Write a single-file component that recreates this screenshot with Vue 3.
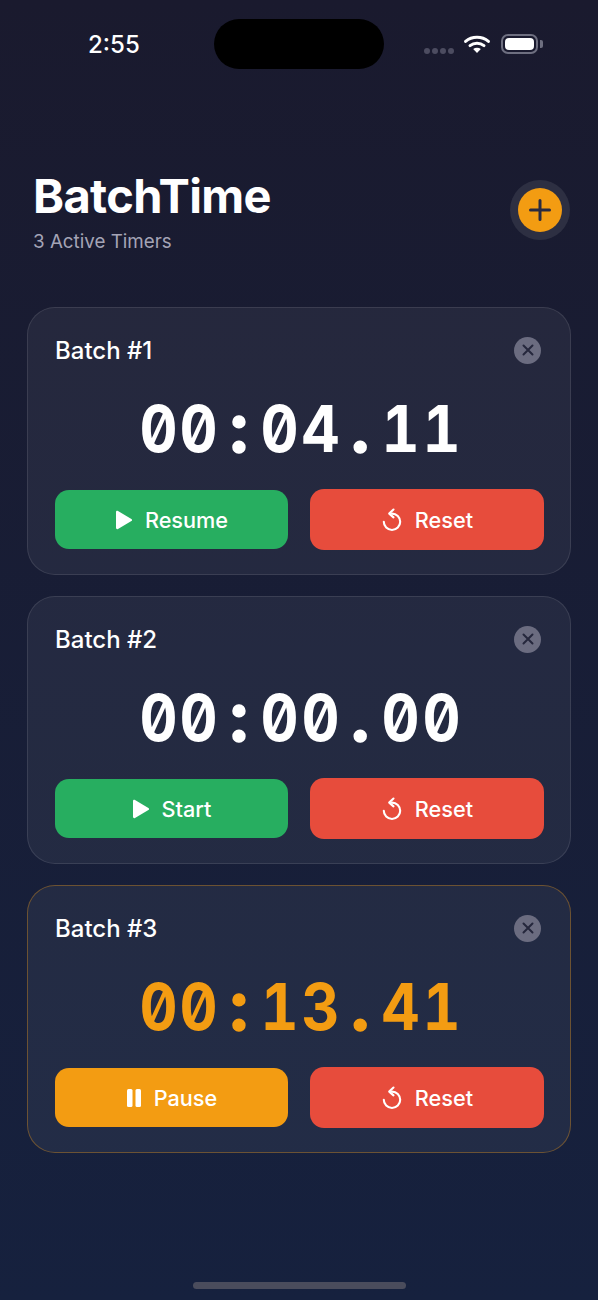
<template>
  <div class="screen">
    <div class="status-bar">
      <span class="clock">2:55</span>
      <div class="island"></div>
      <div class="status-icons">
        <div class="dots"><i></i><i></i><i></i><i></i></div>
        <svg class="wifi" width="26" height="18" viewBox="0 0 26 18">
          <path d="M1.6 6.4C8 .9 18 .9 24.4 6.4" fill="none" stroke="#fff" stroke-width="3" stroke-linecap="round" />
          <path d="M6 10.6C10 7.4 16 7.4 20 10.6" fill="none" stroke="#fff" stroke-width="3" stroke-linecap="round" />
          <path d="M13 18 9.2 13.9C11.4 12.3 14.6 12.3 16.8 13.9Z" fill="#fff" />
        </svg>
        <div class="battery"><div class="battery-fill"></div></div>
        <div class="battery-cap"></div>
      </div>
    </div>

    <header class="header">
      <div>
        <h1>BatchTime</h1>
        <p>{{ timers.length }} Active Timers</p>
      </div>
      <button class="add">
        <svg width="24" height="24" viewBox="0 0 24 24">
          <path d="M12 2.5v19M2.5 12h19" stroke="#2a2a40" stroke-width="3" stroke-linecap="round" />
        </svg>
      </button>
    </header>

    <main class="list">
      <section v-for="t in timers" :key="t.name" class="card" :class="{ running: t.running }">
        <div class="card-top">
          <span class="name">{{ t.name }}</span>
          <button class="close">
            <svg width="14" height="14" viewBox="0 0 14 14">
              <path d="M2.5 2.5l9 9M11.5 2.5l-9 9" stroke="#25273c" stroke-width="2" stroke-linecap="round" />
            </svg>
          </button>
        </div>
        <div class="time">
          <span v-for="(c, i) in t.time" :key="i" class="cell" :class="{ sep: c === ':' || c === '.' }">{{ c }}</span>
        </div>
        <div class="actions">
          <button class="btn" :class="t.running ? 'pause' : 'go'">
            <svg v-if="t.running" width="16" height="20" viewBox="0 0 16 20">
              <rect x="1" y="1" width="5.5" height="18" rx="1.5" fill="#fff" />
              <rect x="9.5" y="1" width="5.5" height="18" rx="1.5" fill="#fff" />
            </svg>
            <svg v-else width="18" height="20" viewBox="0 0 18 20">
              <path d="M1 2.2C1 1 2 .5 3 1l13.4 7.9c.9.5.9 1.7 0 2.2L3 19c-1 .5-2 0-2-1.2Z" fill="#fff" />
            </svg>
            <span>{{ t.label }}</span>
          </button>
          <button class="btn reset">
            <svg width="22" height="24" viewBox="0 0 22 24">
              <path d="M11 5.6a8.2 8.2 0 1 1-8.2 8.2" fill="none" stroke="#fff" stroke-width="2.1" stroke-linecap="round" />
              <path d="M12.5 1.5 8.2 5.6l4.3 3.8" fill="none" stroke="#fff" stroke-width="2.1" stroke-linecap="round" stroke-linejoin="round" />
            </svg>
            <span>Reset</span>
          </button>
        </div>
      </section>
    </main>

    <div class="home-bar"></div>
  </div>
</template>

<script setup>
const timers = [
  { name: 'Batch #1', time: '00:04.11', label: 'Resume', running: false },
  { name: 'Batch #2', time: '00:00.00', label: 'Start', running: false },
  { name: 'Batch #3', time: '00:13.41', label: 'Pause', running: true },
];
</script>

<style>
body {
  background: #16213e;
}
</style>

<style scoped>
.screen {
  position: relative;
  height: 1300px;
  overflow: hidden;
  background: linear-gradient(180deg, #1a1a2e 0%, #16213e 100%);
  color: #fff;
  font-family: Inter, "Liberation Sans", sans-serif;
}

.status-bar {
  display: flex;
  align-items: flex-start;
  height: 69px;
  padding-top: 19px;
  box-sizing: border-box;
}

.clock {
  width: 214px;
  padding: 11px 0 0 88px;
  box-sizing: border-box;
  font-size: 24px;
  line-height: 30px;
  font-weight: 500;
}

.island {
  width: 170px;
  height: 50px;
  border-radius: 25px;
  background: #000;
}

.status-icons {
  display: flex;
  align-items: flex-start;
  margin: 15px 0 0 40px;
}

.dots {
  display: flex;
  gap: 2px;
  margin: 14px 10px 0 0;
}

.dots i {
  width: 6px;
  height: 6px;
  border-radius: 50%;
  background: #4c4c60;
}

.wifi {
  margin-top: 1px;
}

.battery {
  width: 37px;
  height: 20px;
  margin-left: 11px;
  padding: 2px;
  box-sizing: border-box;
  border: 2px solid #6e6f80;
  border-radius: 7px;
}

.battery-fill {
  height: 100%;
  border-radius: 4px;
  background: #fff;
}

.battery-cap {
  width: 3px;
  height: 8px;
  margin: 6px 0 0 2px;
  border-radius: 0 2px 2px 0;
  background: #6e6f80;
}

.header {
  display: flex;
  justify-content: space-between;
  align-items: flex-start;
  padding: 101px 36px 0 33px;
  height: 238px;
  box-sizing: border-box;
}

h1 {
  margin: 0;
  font-size: 47px;
  line-height: 52px;
  font-weight: 700;
  letter-spacing: -0.65px;
}

.header p {
  margin: 7px 0 0;
  font-size: 18.8px;
  line-height: 26px;
  color: #a4a4b6;
}

.add {
  display: flex;
  align-items: center;
  justify-content: center;
  width: 44px;
  height: 44px;
  margin-top: 18px;
  padding: 0;
  border: 0;
  border-radius: 50%;
  background: #f39c12;
  box-shadow: 0 0 0 8px #2d2f42;
}

.list {
  display: flex;
  flex-direction: column;
  gap: 21px;
  padding: 0 27px;
}

.card {
  height: 268px;
  padding: 28px 26px 0 27px;
  box-sizing: border-box;
  border: 1px solid rgba(255, 255, 255, 0.1);
  border-radius: 28px;
  background: rgba(255, 255, 255, 0.055);
}

.card.running {
  border-color: rgba(243, 156, 18, 0.35);
}

.card-top {
  display: flex;
  justify-content: space-between;
  align-items: center;
  height: 28px;
}

.name {
  font-size: 24px;
  font-weight: 500;
}

.close {
  display: flex;
  align-items: center;
  justify-content: center;
  width: 27px;
  height: 27px;
  margin-right: 3px;
  padding: 0;
  border: 0;
  border-radius: 50%;
  background: #6b6c80;
}

.time {
  display: flex;
  justify-content: center;
  align-items: baseline;
  margin-top: 20px;
  font-size: 64px;
  line-height: 86px;
  font-weight: 700;
  font-feature-settings: "zero", "tnum";
}

.cell {
  width: 40.4px;
  text-align: center;
  transform: scaleX(0.92);
}

.cell.sep {
  font-size: 70px;
  transform: none;
  -webkit-text-stroke: 1.5px currentColor;
}

.running .time {
  color: #f39c12;
}

.actions {
  display: grid;
  grid-template-columns: 233px 234px;
  gap: 22px;
  margin-top: 18px;
}

.btn {
  display: flex;
  align-items: center;
  justify-content: center;
  gap: 12px;
  height: 59px;
  padding: 0;
  border: 0;
  border-radius: 14px;
  color: #fff;
  font-family: inherit;
  font-size: 21.7px;
  font-weight: 500;
}

.go {
  background: #27ae60;
}

.pause {
  background: #f39c12;
}

.reset {
  background: #e74c3c;
  height: 61px;
  margin-top: -1px;
}

.home-bar {
  position: absolute;
  left: 193px;
  bottom: 11px;
  width: 213px;
  height: 7px;
  border-radius: 4px;
  background: #4a4c5c;
}
</style>
